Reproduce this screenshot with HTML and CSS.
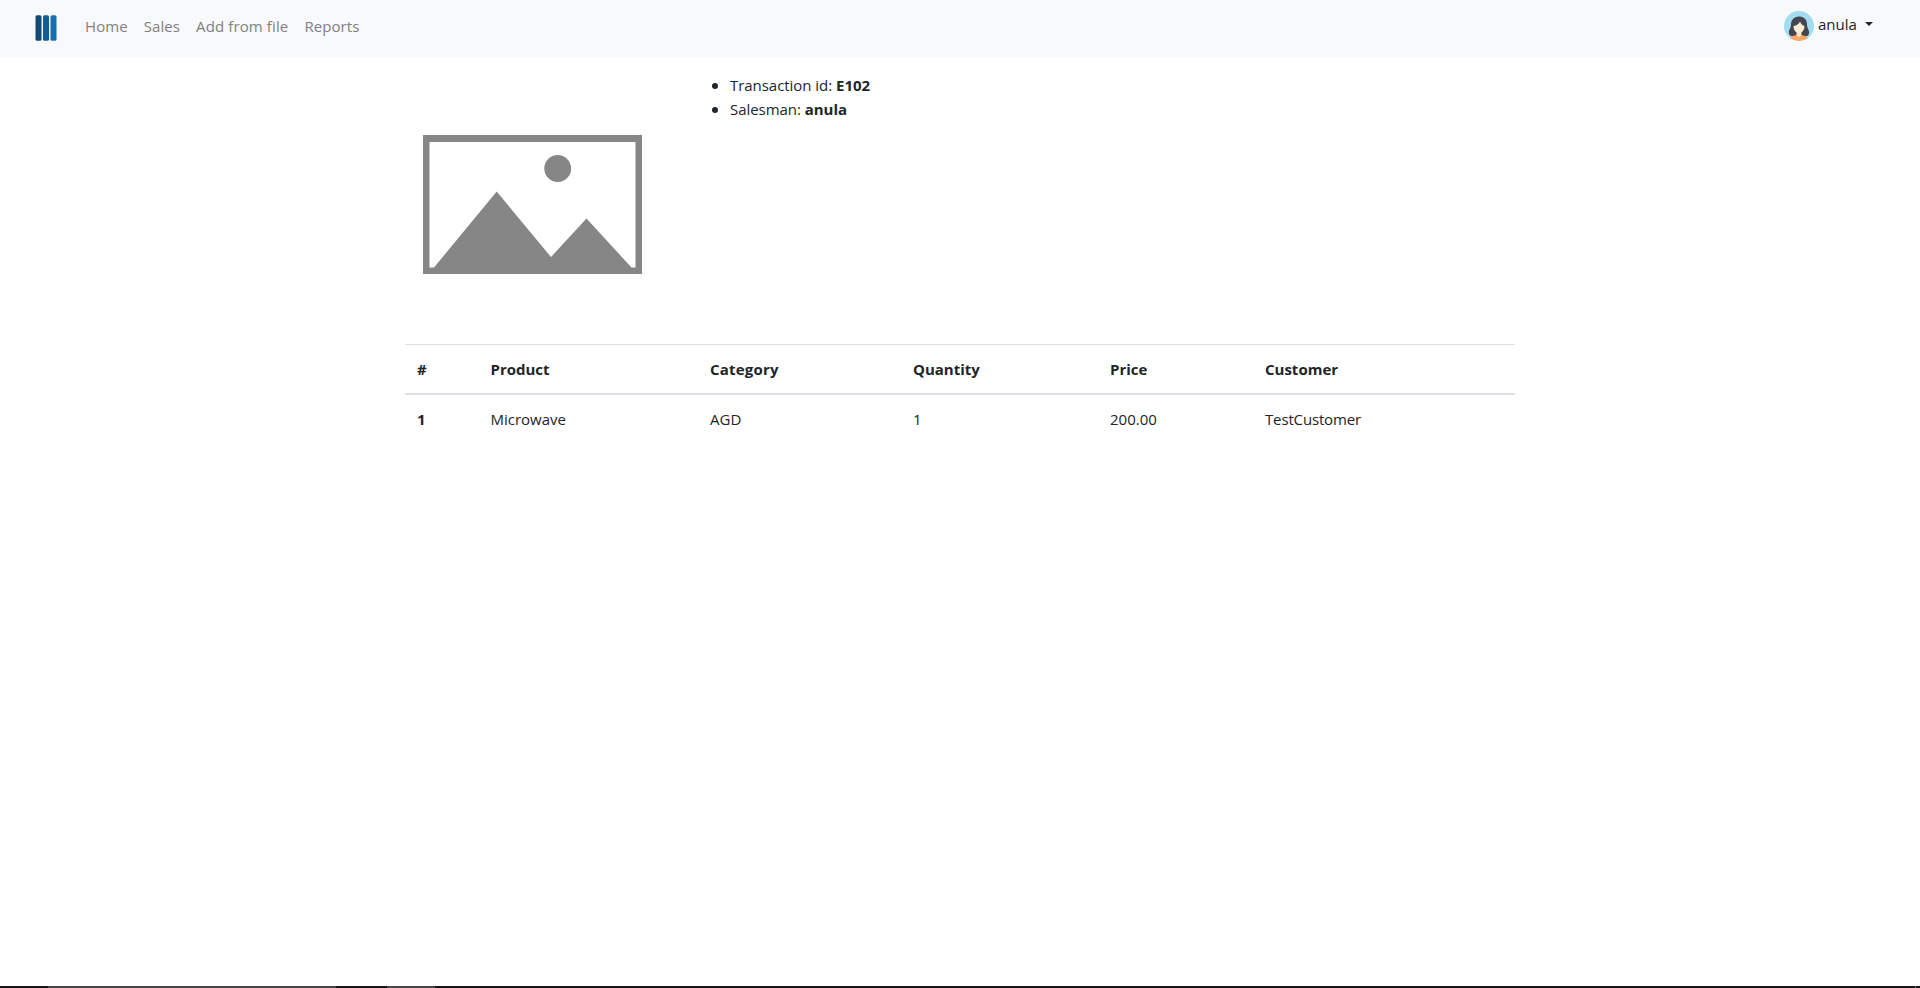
FILE: index.html
```html
<!DOCTYPE html>
<html lang="en">
<head>
<meta charset="utf-8">
<title>Transaction E102</title>
<link rel="stylesheet" href="styles.css">
</head>
<body>
<nav class="navbar">
  <svg class="logo" viewBox="0 0 22 26"><rect x=".5" y=".2" width="6" height="25.6" rx="1.5" fill="#124a73"/><rect x="8" y=".2" width="6" height="25.6" rx="1.5" fill="#125e94"/><rect x="15.5" y=".2" width="6" height="25.6" rx="1.5" fill="#1570b0"/></svg>
  <div class="links"><a>Home</a><a>Sales</a><a class="add">Add from file</a><a>Reports</a></div>
  <div class="user">
    <svg class="avatar" viewBox="0 0 30 30"><defs><clipPath id="disc"><circle cx="15" cy="15" r="15"/></clipPath></defs><g clip-path="url(#disc)"><path fill="#a4dcef" d="M0 0h30v30H0z"/><path fill="#43454f" d="M15.500 5.500C10 5.200 7 9 7 13.500 7 17.500 4.300 19 5 22.500 5.500 25.500 9 26 12 25h6c3 1 6.500.5 7-2.500.7-3.500-2-5-2-9 0-4.500-2.500-7.800-7.500-8z"/><path fill="#ffa764" d="M5.500 30c.2-4 3-5.200 6.500-5.800h6c3.500.6 6.300 1.800 6.500 5.800z"/><path fill="#fde3c8" d="M12.500 19h5v5.200q-2.500 3-5 0z"/><path fill="#fdebd6" d="M9.500 15c3-.5 5.500-2 6.500-4.500 1 2.500 2.400 4 4.500 4.500 0 4-2.200 6.800-5.500 6.800S9.500 19 9.500 15z"/></g></svg>
    <span class="user-name">anula</span><i class="caret"></i>
  </div>
</nav>
<main class="container">
  <section class="summary">
    <svg class="photo" viewBox="0 0 219 139"><path fill="#868686" fill-rule="evenodd" d="M0 0h219v139H0zM6.500 7v125.500H11L73.700 56.500 128 122l35.500-38.500 45 49h4V7z"/><circle cx="134.700" cy="33.500" r="13.400" fill="#868686"/></svg>
    <ul class="facts">
      <li>Transaction id: <b>E102</b></li>
      <li>Salesman: <b>anula</b></li>
    </ul>
  </section>
  <table class="items">
    <colgroup><col class="c1"><col class="c2"><col class="c3"><col class="c4"><col class="c5"><col></colgroup>
    <thead><tr><th>#</th><th>Product</th><th class="category">Category</th><th>Quantity</th><th>Price</th><th>Customer</th></tr></thead>
    <tbody><tr><th>1</th><td>Microwave</td><td>AGD</td><td>1</td><td>200.00</td><td class="buyer">TestCustomer</td></tr></tbody>
  </table>
</main>
<footer class="edge"><span class="task wide"></span><span class="task small"></span><span class="peek"></span></footer>
</body>
</html>
```
FILE: styles.css
```css
* { box-sizing: border-box; }
body { margin: 0; height: 988px; display: flex; flex-direction: column; overflow: hidden; background: #fff; color: #212529; font: 15px/24px "Open Sans", "Noto Sans", sans-serif; }
b, th { font-weight: 700; }
.navbar { display: flex; align-items: flex-start; height: 57px; flex: none; padding: 0 47px 0 35px; background: #f8f9fb; }
.logo { width: 22px; height: 26px; margin-top: 15px; }
.links { display: flex; gap: 16px; margin: 14px auto 0 28px; color: #808081; white-space: nowrap; letter-spacing: .08px; }
.add { letter-spacing: .12px; }
.user { display: flex; padding-top: 11px; }
.avatar { width: 30px; height: 30px; }
.user-name { margin: 1px 0 0 4px; width: 39px; }
.caret { margin: 11px 0 0 8px; border: 4.500px solid transparent; border-top-color: #212529; border-bottom: 0; height: 4px; }
.container { width: 1110px; margin: 0 auto; }
.summary { display: flex; height: 287px; }
.photo { width: 219px; height: 139px; margin: 78px 0 0 18px; }
.facts { margin: 16px 0 0 48px; padding: 0 0 0 27px; list-style: none; }
.facts li { display: flex; align-items: center; white-space: pre; letter-spacing: -.04px; }
.facts li::before { content: ""; width: 6px; height: 6px; margin: 1px 12px 0 -5px; border-radius: 50%; background: #212529; }
.facts li { padding-left: 0; }
.items { width: 1110px; table-layout: fixed; border-collapse: separate; border-spacing: 0; }
.items th, .items td { padding: 12px; border-top: 1px solid #dee2e6; text-align: left; line-height: 24px; }
.items thead th { border-bottom: 2px solid #dee2e6; }
.items tbody th, .items tbody td { border-top: 0; }
.items thead .category { letter-spacing: .2px; }
.items .buyer { letter-spacing: -.15px; }
.c1 { width: 73.5px; }
.c2 { width: 219.5px; }
.c3 { width: 203px; }
.c4 { width: 197px; }
.c5 { width: 155px; }
.edge { display: flex; height: 2px; margin-top: auto; background: #181416; }
.task { height: 2px; background: #4a4648; }
.wide { width: 288px; margin-left: 48px; }
.small { width: 48px; margin-left: 51px; }
.peek { width: 1px; height: 2px; margin: 0 4px 0 auto; background: #777; }
```
